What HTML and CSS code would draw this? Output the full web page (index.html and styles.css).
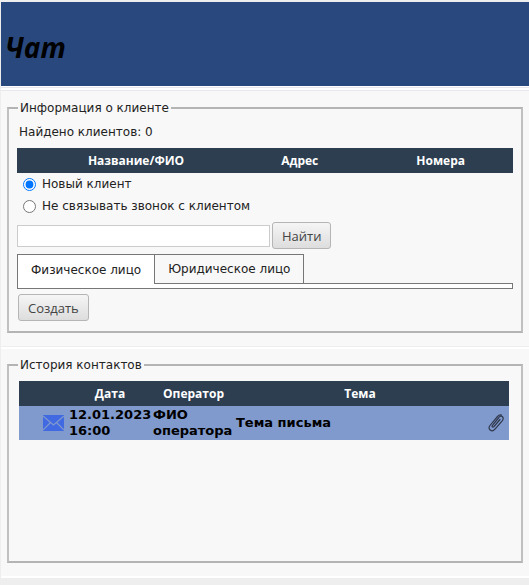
FILE: index.html
```
<!DOCTYPE html>
<html lang="ru">
<head>
<meta charset="utf-8">
<meta name="viewport" content="width=device-width, initial-scale=1">
<title>Чат</title>
<link rel="stylesheet" href="styles.css">
</head>
<body>

<header class="header">
	<h1>Чат</h1>
</header>

<section class="panel">
	<fieldset class="box">
		<legend>Информация о клиенте</legend>
		<p class="found">Найдено клиентов: 0</p>
		<table class="grid">
			<colgroup><col class="col-name"><col class="col-address"><col class="col-phones"></colgroup>
			<tr><th>Название/ФИО</th><th>Адрес</th><th class="phones">Номера</th></tr>
		</table>
		<div class="choices">
			<label><input type="radio" name="client" checked>Новый клиент</label>
			<label><input type="radio" name="client">Не связывать звонок с клиентом</label>
		</div>
		<div class="search">
			<input class="search-input" type="text" aria-label="Поиск клиента">
			<button class="btn" type="button">Найти</button>
		</div>
		<div class="tabs" role="tablist">
			<button class="tab active" type="button" role="tab" aria-selected="true">Физическое лицо</button>
			<button class="tab" type="button" role="tab" aria-selected="false">Юридическое лицо</button>
		</div>
		<div class="tab-body"></div>
		<button class="btn btn-create" type="button">Создать</button>
	</fieldset>
</section>

<section class="panel">
	<fieldset class="box history">
		<legend>История контактов</legend>
		<table class="grid">
			<colgroup><col class="col-icon"><col class="col-date"><col class="col-operator"><col><col class="col-file"></colgroup>
			<thead>
				<tr><th></th><th>Дата</th><th>Оператор</th><th>Тема</th><th></th></tr>
			</thead>
			<tbody>
				<tr>
					<td class="mail">
						<svg width="21" height="16" viewBox="0 0 21 16">
							<path fill="#4169e1" d="M0 0h21v16H0z"/>
							<path fill="none" stroke="#809acd" stroke-width="1.2" d="M0 1l10.500 9L21 1M0 15l7.500-7.500M21 15l-7.500-7.500"/>
						</svg>
					</td>
					<td>12.01.2023 16:00</td>
					<td>ФИО оператора</td>
					<td>Тема письма</td>
					<td class="file">
						<svg width="17" height="18" viewBox="0 0 17 18">
							<path fill="none" stroke="#30384c" stroke-width="1.200" stroke-linecap="round" stroke-linejoin="round" d="M12 5.500L6 12.500Q5 13.500 4.300 12.900Q3.700 12.200 4.600 11.200L10.500 4Q12.300 1.200 14.200 2.500Q16.200 4.200 14.200 6.800L7 15.200Q4.500 18 2.200 16Q0 14 2 11.500L9.500 2.500Q11.500 .2 13.500 1"/>
						</svg>
					</td>
				</tr>
			</tbody>
		</table>
	</fieldset>
</section>

</body>
</html>
```
FILE: styles.css
```
* {
	box-sizing: border-box;
}

html {
	background: #eee;
}

body {
	margin: 0;
	padding: 2px 0 0 1px;
	background: #eee;
	color: #222;
	font: 12px/16px Verdana, "DejaVu Sans", sans-serif;
}

.header {
	display: flex;
	align-items: center;
	height: 84px;
	padding: 6px 4px 0;
	background: #29487d;
	color: #000;
}

.header h1 {
	margin: 0;
	font: italic bold 28px/38px "Open Sans", sans-serif;
}

.panel {
	margin-top: 4px;
	padding: 8px 6px 13px;
	border-top: 2px solid #fff;
	background: #f8f8f8;
}
.panel + .panel {margin-top: 1px;border-bottom: 2px solid #fff;}

.header + .panel {
	padding-top: 9px;
	border-top: 1px solid #eae6ee;
	box-shadow: 0 -2px #fff, 0 -3px #eae6ee, 0 -4px #fff;
}

.box {
	min-width: 0;
	margin: 0;
	padding: 8px 8px 10px;
	border: 2px solid;
	border-color: #b4b4b4 #c0c0c0 #b4b4b4 #c0c0c0;
}

.box legend {
	margin-left: 1px;
	padding: 0 2px;
}

.found {
	margin: 0 2px 8px;
}

.grid {
	width: 100%;
	border-collapse: collapse;
	table-layout: fixed;
}
.grid th {
	height: 25px;
	padding: 0;
	background: #2c3e50;
	color: #fff;
	font: bold 12px/16px "Open Sans", sans-serif;
}
.grid td {
	padding: 1px 0 1px 1px;
	background: #809acd;
	color: #000;
	font-size: 13px;
	font-weight: bold;
}
.grid .phones {padding-left: 24px;}

.col-name {width: 48%;}
.col-address {width: 18%;}
.col-phones {width: 34%;}

.choices {
	padding: 0 6px;
}
.choices label {
	display: flex;
	align-items: center;
	gap: 6px;
	height: 22px;
}
.choices input {
	width: 13px;
	height: 13px;
	margin: 0;
}

.search {
	display: flex;
	align-items: center;
	gap: 2px;
	padding-top: 5px;
}
.search-input {
	flex: 0 1 253px;
	min-width: 0;
	height: 22px;
	padding: 1px 4px;
	border: 1px solid #ccc;
	background: #fff;
}

.btn {
	height: 27px;
	padding: 0 9px;
	border: 1px solid #b5b5b5;
	border-radius: 3px;
	background: linear-gradient(#f5f5f5, #ddd);
	color: #444;
	font: 13px/18px "Open Sans", sans-serif;
}
.btn-create {
	display: block;
	margin: 5px 1px 0;
}

.tabs {
	display: flex;
	padding-top: 5px;
}
.tab {
	height: 29px;
	padding: 0 13px;
	border: 1px solid #777;
	border-width: 1px 1px 0 0;
	background: #f8f8f8;
	color: #222;
	font: inherit;
}
.tab.active {
	position: relative;
	z-index: 1;
	height: 30px;
	margin-bottom: -1px;
	border-left-width: 1px;
	background: #fff;
}
.tab-body {
	height: 6px;
	border: 1px solid #777;
	background: #fff;
}

.history {
	min-height: 206px;
	padding: 8px 12px 10px 10px;
}
.box.history legend {margin-left: -1px;}

.col-icon {width: 49px;}
.col-date {width: 84px;}
.col-operator {width: 83px;}
.col-file {width: 24px;}

.mail,
.file {
	text-align: right;
}
.grid svg {
	display: inline-block;
	vertical-align: middle;
}
.grid .mail {padding-right: 4px;}
.grid .file {padding-right: 4px;}
```
